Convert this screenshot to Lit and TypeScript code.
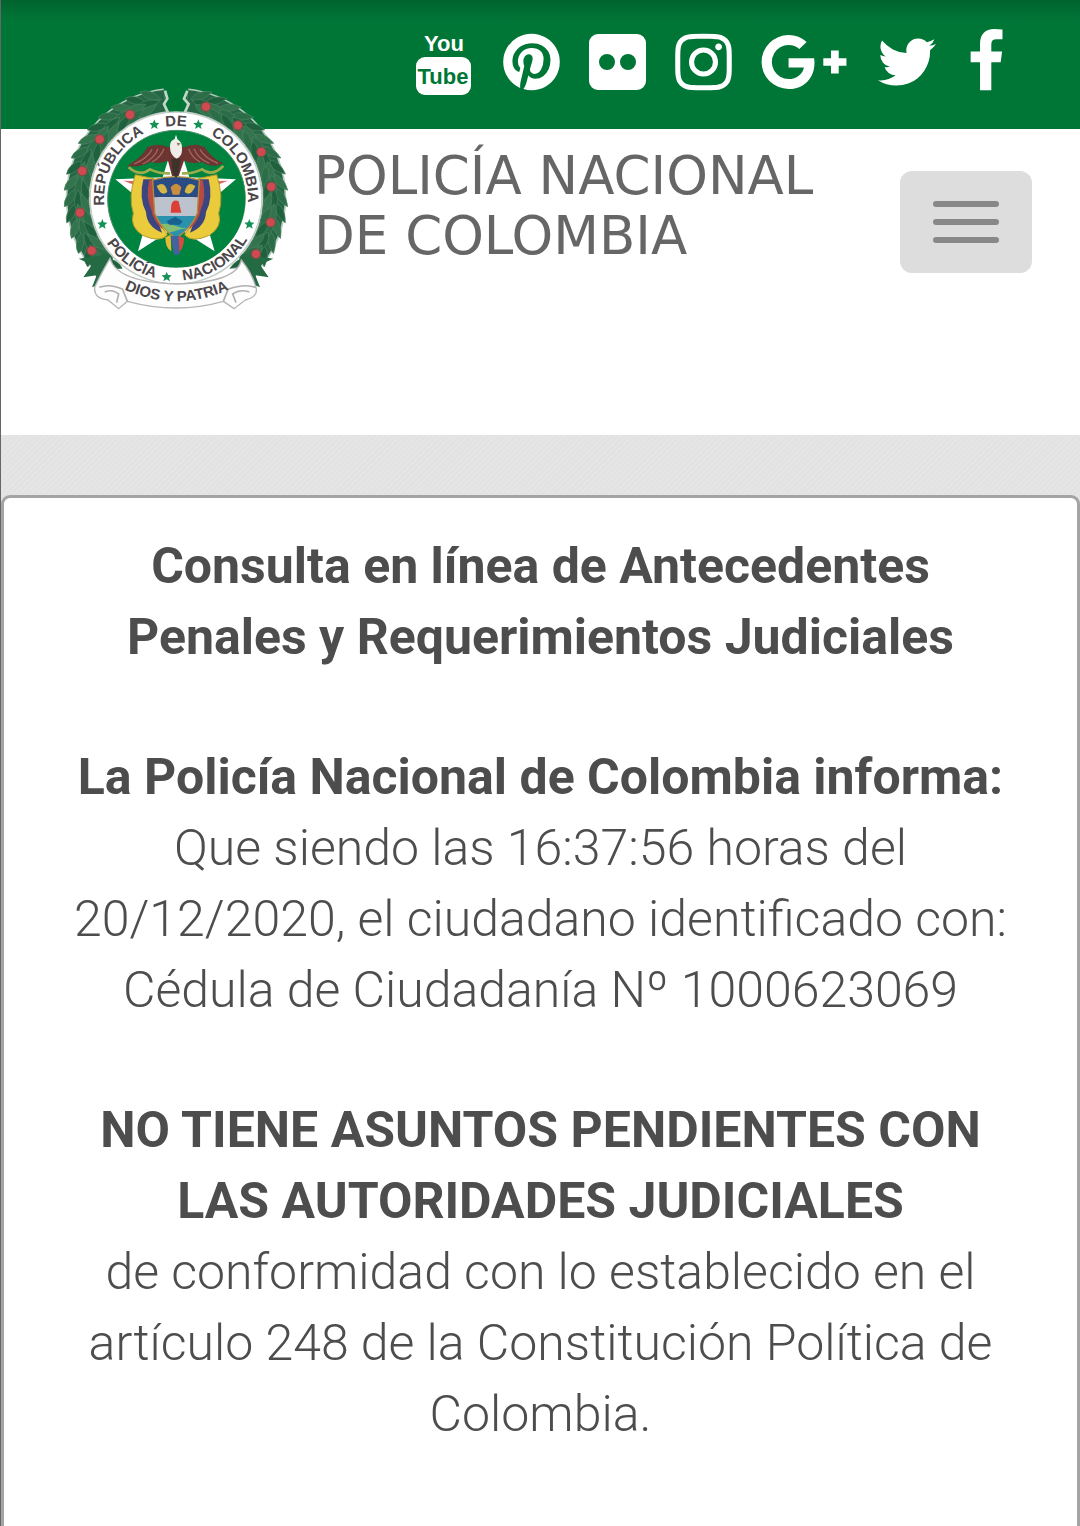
import { LitElement, html, svg, css } from "lit";
import { customElement } from "lit/decorators.js";

const PINTEREST =
  "M1664 896q0 209-103 385.5t-279.5 279.5-385.5 103q-111 0-218-32 59-93 78-164 9-34 54-211 20 39 73 67.5t114 28.5q121 0 216-68.5t147-188.5 52-270q0-114-59.5-214t-172.5-163-255-63q-105 0-196 29t-154.5 77-109 110.5-67 129.5-21.5 134q0 104 40 183t117 111q30 12 38-20 2-7 8-31t8-30q6-23-11-43-51-61-51-151 0-151 104.5-259.5t273.5-108.5q151 0 235.5 82t84.5 213q0 170-68.5 289t-175.5 119q-61 0-98-43.5t-23-104.5q8-35 26.5-93.5t30-103 11.5-75.5q0-50-27-83t-77-33q-62 0-105 57t-43 142q0 73 25 122l-99 418q-17 70-13 177-206-91-333-281t-127-423q0-209 103-385.5t279.5-279.5 385.5-103 385.5 103 279.5 279.5 103 385.5z";
const INSTAGRAM =
  "M1152 896q0-106-75-181t-181-75-181 75-75 181 75 181 181 75 181-75 75-181zm138 0q0 164-115 279t-279 115-279-115-115-279 115-279 279-115 279 115 115 279zm108-410q0 38-27 65t-65 27-65-27-27-65 27-65 65-27 65 27 27 65zm-502-220q-7 0-76.5-.5t-105.5 0-96.5 3-103 10-71.5 18.5q-50 20-88 58t-58 88q-11 29-18.5 71.5t-10 103-3 96.5 0 105.5.5 76.5-.5 76.5 0 105.5 3 96.5 10 103 18.5 71.5q20 50 58 88t88 58q29 11 71.5 18.5t103 10 96.5 3 105.5 0 76.5-.5 76.5.5 105.5 0 96.5-3 103-10 71.5-18.5q50-20 88-58t58-88q11-29 18.5-71.5t10-103 3-96.5 0-105.5-.5-76.5.5-76.5 0-105.5-3-96.5-10-103-18.5-71.5q-20-50-58-88t-88-58q-29-11-71.5-18.5t-103-10-96.5-3-105.5 0-76.5.5zm768 630q0 229-5 317-10 208-124 322t-322 124q-88 5-317 5t-317-5q-208-10-322-124t-124-322q-5-88-5-317t5-317q10-208 124-322t322-124q88-5 317-5t317 5q208 10 322 124t124 322q5 88 5 317z";
const GOOGLE_PLUS =
  "M1437 913q0 208-87 370.5t-248 254-369 91.5q-149 0-285-58t-234-156-156-234-58-285 58-285 156-234 234-156 285-58q286 0 491 192l-199 191q-117-113-292-113-123 0-227.5 62t-165.5 168.5-61 232.5 61 232.5 165.5 168.5 227.5 62q83 0 152.5-23t114.5-57.5 78.5-78.5 49-83 21.5-74h-416v-252h692q12 63 12 122zm867-122v210h-209v209h-210v-209h-209v-210h209v-209h210v209h209z";
const TWITTER =
  "M1684 408q-67 98-162 167 1 14 1 42 0 130-38 259.5t-115.5 248.5-184.5 210.5-258 146-323 54.5q-271 0-496-145 35 4 78 4 225 0 401-138-105-2-188-64.5t-114-159.5q33 5 61 5 43 0 85-11-112-23-185.5-111.5t-73.5-205.5v-4q68 38 146 41-66-44-105-115t-39-154q0-88 44-163 121 149 294.5 238.5t371.5 99.5q-8-38-8-74 0-134 94.5-228.5t228.5-94.5q140 0 236 102 109-21 205-78-37 115-142 178 93-10 186-50z";
const FACEBOOK =
  "M1343 12v264h-157q-86 0-116 36t-30 108v189h293l-39 296h-254v759h-306v-759h-255v-296h255v-218q0-186 104-288.5t277-102.5q147 0 228 12z";

/* Laurel leaves, fanned along both sides of the ring. Angles are measured from the top. */
const CENTER_X = 378;
const CENTER_Y = 354;
const leaves: { x: number; y: number; turn: number; tone: string }[] = [];
for (const side of [-1, 1]) {
  for (let row = 0; row < 3; row++) {
    for (let step = 0; step < 15; step++) {
      const angle = 14 + step * 8.4 + row * 2;
      const rad = (angle * Math.PI) / 180;
      const radius = [316, 294, 274][row];
      leaves.push({
        x: Math.round(CENTER_X + side * Math.sin(rad) * radius),
        y: Math.round(CENTER_Y - Math.cos(rad) * radius),
        turn: Math.round(side * (angle - [34, 2, -18][row])),
        tone: ["#2a6d47", "#1f613d", "#33744d"][(row + step) % 3],
      });
    }
  }
}
const berries = [
  [240, 104], [149, 178], [97, 273], [90, 398], [125, 512],
  [468, 80], [564, 136], [634, 216], [664, 320], [662, 427], [618, 522],
];
const stars = [[313, 133], [445, 133], [157, 432], [598, 432], [350, 590]];

@customElement("police-emblem")
export class PoliceEmblem extends LitElement {
  static styles = css`
    :host { display: block; }
    .art { display: block; width: 250px; height: 240px; }
    .ring-text { font: bold 45px "Liberation Sans", Arial, sans-serif; fill: #4b4649; text-anchor: middle; }
  `;

  render() {
    return html`
      <svg class="art" viewBox="0 0 750 720" role="img" aria-label="Escudo de la Policía Nacional">
        <defs>
          <path id="upper" d="M378 570A216 216 0 0 1 378 138A216 216 0 0 1 378 570" />
          <path id="lower" d="M378 106A248 248 0 0 0 378 602A248 248 0 0 0 378 106" />
          <path id="motto" d="M190 612Q380 716 570 612" />
          <clipPath id="shield"><path d="M308 300Q378 280 448 300L442 400Q425 445 378 475Q331 445 314 400Z" /></clipPath>
        </defs>
        <path d="M345 62A294 294 0 0 0 152 542M411 62A294 294 0 0 1 604 542" fill="none" stroke="#b4cbbd" stroke-width="74" />
        <path d="M345 62A294 294 0 0 0 152 542M411 62A294 294 0 0 1 604 542" fill="none" stroke="#276644" stroke-width="64" />
        ${leaves.map(
          (l) => svg`<path transform="translate(${l.x} ${l.y}) rotate(${l.turn})"
            d="M-34 0Q-8 -22 34 0Q-8 22 -34 0Z" fill=${l.tone} stroke="#4a8262" stroke-width="2" />`
        )}
        <path d="M345 32L352 56L342 72L354 98M404 98L416 72L402 56L412 32" fill="none" stroke="#c4d5ca" stroke-width="8" />
        <path d="M86 536L126 554L100 592L140 586L126 622L180 600L190 520ZM670 536L630 554L656 592L616 586L630 622L580 600L566 520Z" fill="#246a43" />
        <circle cx="378" cy="354" r="258" fill="#fff" stroke="#c5cfc9" stroke-width="5" />
        <circle cx="380" cy="358" r="207" fill="#00833f" stroke="#4b8f69" stroke-width="3" />
        <path d="M180 535Q148 590 134 622Q130 655 174 660L206 686L232 664Q380 704 520 664L552 686L586 660Q626 650 618 622Q606 580 574 540Q560 608 378 612Q200 606 180 535Z" fill="#fdfdfd" stroke="#b5b5b5" stroke-width="4" />
        <path d="M148 622Q180 610 218 628L232 664M164 636Q188 626 206 642L200 668M618 622Q580 610 534 628L520 664M598 636Q570 626 548 642L558 668" fill="none" stroke="#b0b0b0" stroke-width="5" />
        <circle cx="378" cy="354" r="232" fill="none" stroke="#fff" stroke-width="45" />
        <text class="ring-text"><textPath href="#upper" startOffset="33%">REPÚBLICA</textPath></text>
        <text class="ring-text"><textPath href="#upper" startOffset="50%">DE</textPath></text>
        <text class="ring-text"><textPath href="#upper" startOffset="67%">COLOMBIA</textPath></text>
        <text class="ring-text"><textPath href="#lower" startOffset="40%">POLICÍA</textPath></text>
        <text class="ring-text"><textPath href="#lower" startOffset="59%">NACIONAL</textPath></text>
        <text class="ring-text"><textPath href="#motto" startOffset="50%">DIOS Y PATRIA</textPath></text>
        ${stars.map(
          ([x, y]) => svg`<path transform="translate(${x} ${y})" fill="#159257"
            d="M0 -15L4 -5L15 -4L7 4L10 14L0 8L-10 14L-7 4L-15 -4L-4 -5Z" />`
        )}
        ${berries.map(([x, y]) => svg`<circle cx=${x} cy=${y} r="14" fill="#cf4a50" stroke="#7a4a45" stroke-width="3" />`)}

        <path d="M378 164L418 292L558 298L456 384L494 514L378 440L264 514L300 384L196 298L338 292Z" fill="#fff" />
        <path d="M220 302L270 304L276 324ZM534 302L484 304L478 324Z" fill="#d66b63" />
        <path d="M256 284Q234 350 250 400Q238 440 278 466Q330 490 352 464Q318 420 314 376L312 296Z" fill="#e9cb3c" stroke="#b79b2c" stroke-width="3" />
        <path d="M280 298Q266 354 288 396Q290 440 336 458Q318 410 312 376V298Z" fill="#3b4580" />
        <path d="M298 300Q286 350 304 390Q308 420 338 448Q324 390 320 300Z" fill="#b54b42" />
        <path d="M500 284Q522 350 506 400Q518 440 478 466Q426 490 404 464Q438 420 442 376L444 296Z" fill="#e9cb3c" stroke="#b79b2c" stroke-width="3" />
        <path d="M476 298Q490 354 468 396Q466 440 420 458Q438 410 444 376V298Z" fill="#3b4580" />
        <path d="M458 300Q470 350 452 390Q448 420 418 448Q432 390 436 300Z" fill="#b54b42" />
        <g clip-path="url(#shield)">
          <path d="M300 280H460V352H300Z" fill="#284c83" />
          <path d="M300 352H460V408H300Z" fill="#bcc3ce" />
          <path d="M300 408H460V480H300Z" fill="#2b92ad" />
          <path d="M320 318Q345 300 352 336Q334 352 320 318ZM436 318Q411 300 404 336Q422 352 436 318Z" fill="#d6b547" />
          <path d="M362 322Q378 300 394 322L388 344H368Z" fill="#c98d3d" />
          <path d="M364 374Q370 356 386 364L394 398H362Z" fill="#dc4035" />
          <path d="M314 438Q345 424 378 438T444 438V450Q410 440 378 452T314 450Z" fill="#83bd72" />
          <path d="M350 424L376 410L398 424L390 434H358Z" fill="#17608f" />
        </g>
        <path d="M308 300Q378 280 448 300L442 400Q425 445 378 475Q331 445 314 400Z" fill="none" stroke="#b58e3a" stroke-width="4" />
        <path d="M346 472L362 464L364 514Q346 506 346 472Z" fill="#e5ba37" />
        <path d="M362 468H388V524H372Z" fill="#4262a0" />
        <path d="M386 468L402 474Q402 502 388 516Z" fill="#d84b40" />
        <path d="M232 258Q278 230 292 202Q322 186 358 202L400 202Q440 186 466 204Q482 232 520 250Q490 266 456 246Q426 254 402 242L386 288H366L354 242Q326 254 302 246Q264 264 232 258Z" fill="#6d3532" />
        <path d="M252 252Q292 236 306 208M278 252Q312 236 324 206M306 246Q332 232 342 206M504 250Q464 234 450 208M478 250Q444 236 432 206M450 246Q424 230 416 206" fill="none" stroke="#a0665b" stroke-width="4" />
        <path d="M360 202Q358 180 378 176Q398 182 396 210Q396 230 380 236Q360 226 360 202Z" fill="#f0ece7" />
        <path d="M380 188L392 190L384 198Z" fill="#8a7c5d" />
        <path d="M364 236H392L386 282L378 294L368 280Z" fill="#3d332a" />
        <path d="M236 262Q270 292 300 268Q330 282 360 280M520 258Q486 292 456 268Q426 282 396 280" fill="none" stroke="#9eac4c" stroke-width="8" />
      </svg>
    `;
  }
}

const glyph = (viewBox: string, path: string, size: string) =>
  html`<svg class="icon ${size}" viewBox=${viewBox} aria-hidden="true"><path d=${path} /></svg>`;

@customElement("social-links")
export class SocialLinks extends LitElement {
  static styles = css`
    :host { display: block; }
    .links { display: flex; justify-content: flex-end; gap: 29px; }
    .link { display: block; color: #fff; }
    .icon { display: block; height: 66px; fill: currentColor; overflow: visible; }
    .square { width: 57px; }
    .wide { width: 86px; }
    .bird { width: 62px; }
    .slim { width: 38px; }
    .word { font: bold 22px "Liberation Sans Narrow", "Liberation Sans", sans-serif; text-anchor: middle; }
    .on-plate { fill: #007636; }
  `;

  render() {
    return html`
      <nav class="links" aria-label="Redes sociales">
        <a class="link" href="#youtube" aria-label="YouTube">
          <svg class="icon square" viewBox="0 0 57 66">
            <text class="word" x="27" y="22">You</text>
            <rect x="-1" y="28" width="55" height="38" rx="9" />
            <text class="word on-plate" x="26" y="55">Tube</text>
          </svg>
        </a>
        <a class="link" href="#pinterest" aria-label="Pinterest">${glyph("128 0 1536 1792", PINTEREST, "square")}</a>
        <a class="link" href="#flickr" aria-label="Flickr">
          <svg class="icon square" viewBox="0 0 57 66" aria-hidden="true">
            <path fill-rule="evenodd" d="M9 5H48A9 9 0 0 1 57 14V52A9 9 0 0 1 48 61H9A9 9 0 0 1 0 52V14A9 9 0 0 1 9 5ZM10 33A8 8 0 0 0 26 33A8 8 0 0 0 10 33ZM31 33A8 8 0 0 0 47 33A8 8 0 0 0 31 33Z" />
          </svg>
        </a>
        <a class="link" href="#instagram" aria-label="Instagram">${glyph("128 0 1536 1792", INSTAGRAM, "square")}</a>
        <a class="link" href="#google-plus" aria-label="Google+">${glyph("0 0 2304 1792", GOOGLE_PLUS, "wide")}</a>
        <a class="link" href="#twitter" aria-label="Twitter">${glyph("64 0 1664 1792", TWITTER, "bird")}</a>
        <a class="link" href="#facebook" aria-label="Facebook">${glyph("384 0 1024 1792", FACEBOOK, "slim")}</a>
      </nav>
    `;
  }
}

@customElement("app-root")
export class AppRoot extends LitElement {
  static styles = css`
    :host {
      display: flex;
      flex-direction: column;
      box-sizing: border-box;
      min-height: 100vh;
      border-left: 1px solid #666;
      background: #fff;
      color: #4d4d4d;
      font-family: Roboto, sans-serif;
    }
    .topbar {
      padding: 29px 75px 34px 24px;
      background: linear-gradient(#00632e, #007235 16px, #007636 24px);
    }
    .masthead {
      display: flex;
      align-items: flex-start;
      padding: 0 48px 115px 49px;
    }
    .emblem { margin-top: -49px; }
    .brand {
      flex: 1;
      margin: 0;
      padding: 17px 0 0 14px;
      color: #666;
      font: 400 53px/60px "DejaVu Sans", Verdana, sans-serif;
    }
    .menu {
      display: flex;
      flex-direction: column;
      align-items: center;
      gap: 12px;
      margin-top: 42px;
      padding: 30px 33px;
      border: 0;
      border-radius: 12px;
      background: #ddd;
    }
    .bar { width: 66px; height: 6px; border-radius: 3px; background: #888; }
    .page {
      flex: 1;
      display: flex;
      padding-top: 60px;
      background: repeating-linear-gradient(135deg, #e2e2e2 0 2px, #e5e5e5 2px 4px);
    }
    .panel {
      flex: 1;
      padding: 33px 60px 0;
      border: 3px solid #a4a4a4;
      border-bottom: 0;
      border-radius: 9px 9px 0 0;
      background: #fff;
      text-align: center;
      font-size: 50px;
      font-weight: 300;
      line-height: 71px;
    }
    .title { margin: 0 0 69px; font-size: 50px; font-weight: 700; }
    .text { margin: 0 0 69px; }
    .strong { font-weight: 700; }
  `;

  render() {
    return html`
      <header>
        <div class="topbar"><social-links></social-links></div>
        <div class="masthead">
          <police-emblem class="emblem"></police-emblem>
          <p class="brand">POLICÍA NACIONAL<br />DE COLOMBIA</p>
          <button class="menu" type="button" aria-label="Menú">
            <span class="bar"></span><span class="bar"></span><span class="bar"></span>
          </button>
        </div>
      </header>
      <main class="page">
        <section class="panel">
          <h1 class="title">Consulta en línea de Antecedentes Penales y Requerimientos Judiciales</h1>
          <p class="text">
            <b class="strong">La Policía Nacional de Colombia informa:</b><br />
            Que siendo las 16:37:56 horas del 20/12/2020, el ciudadano identificado con:<br />
            Cédula de Ciudadanía Nº 1000623069
          </p>
          <p class="text">
            <b class="strong">NO TIENE ASUNTOS PENDIENTES CON LAS AUTORIDADES JUDICIALES</b><br />
            de conformidad con lo establecido en el artículo 248 de la Constitución Política de Colombia.
          </p>
        </section>
      </main>
    `;
  }
}
